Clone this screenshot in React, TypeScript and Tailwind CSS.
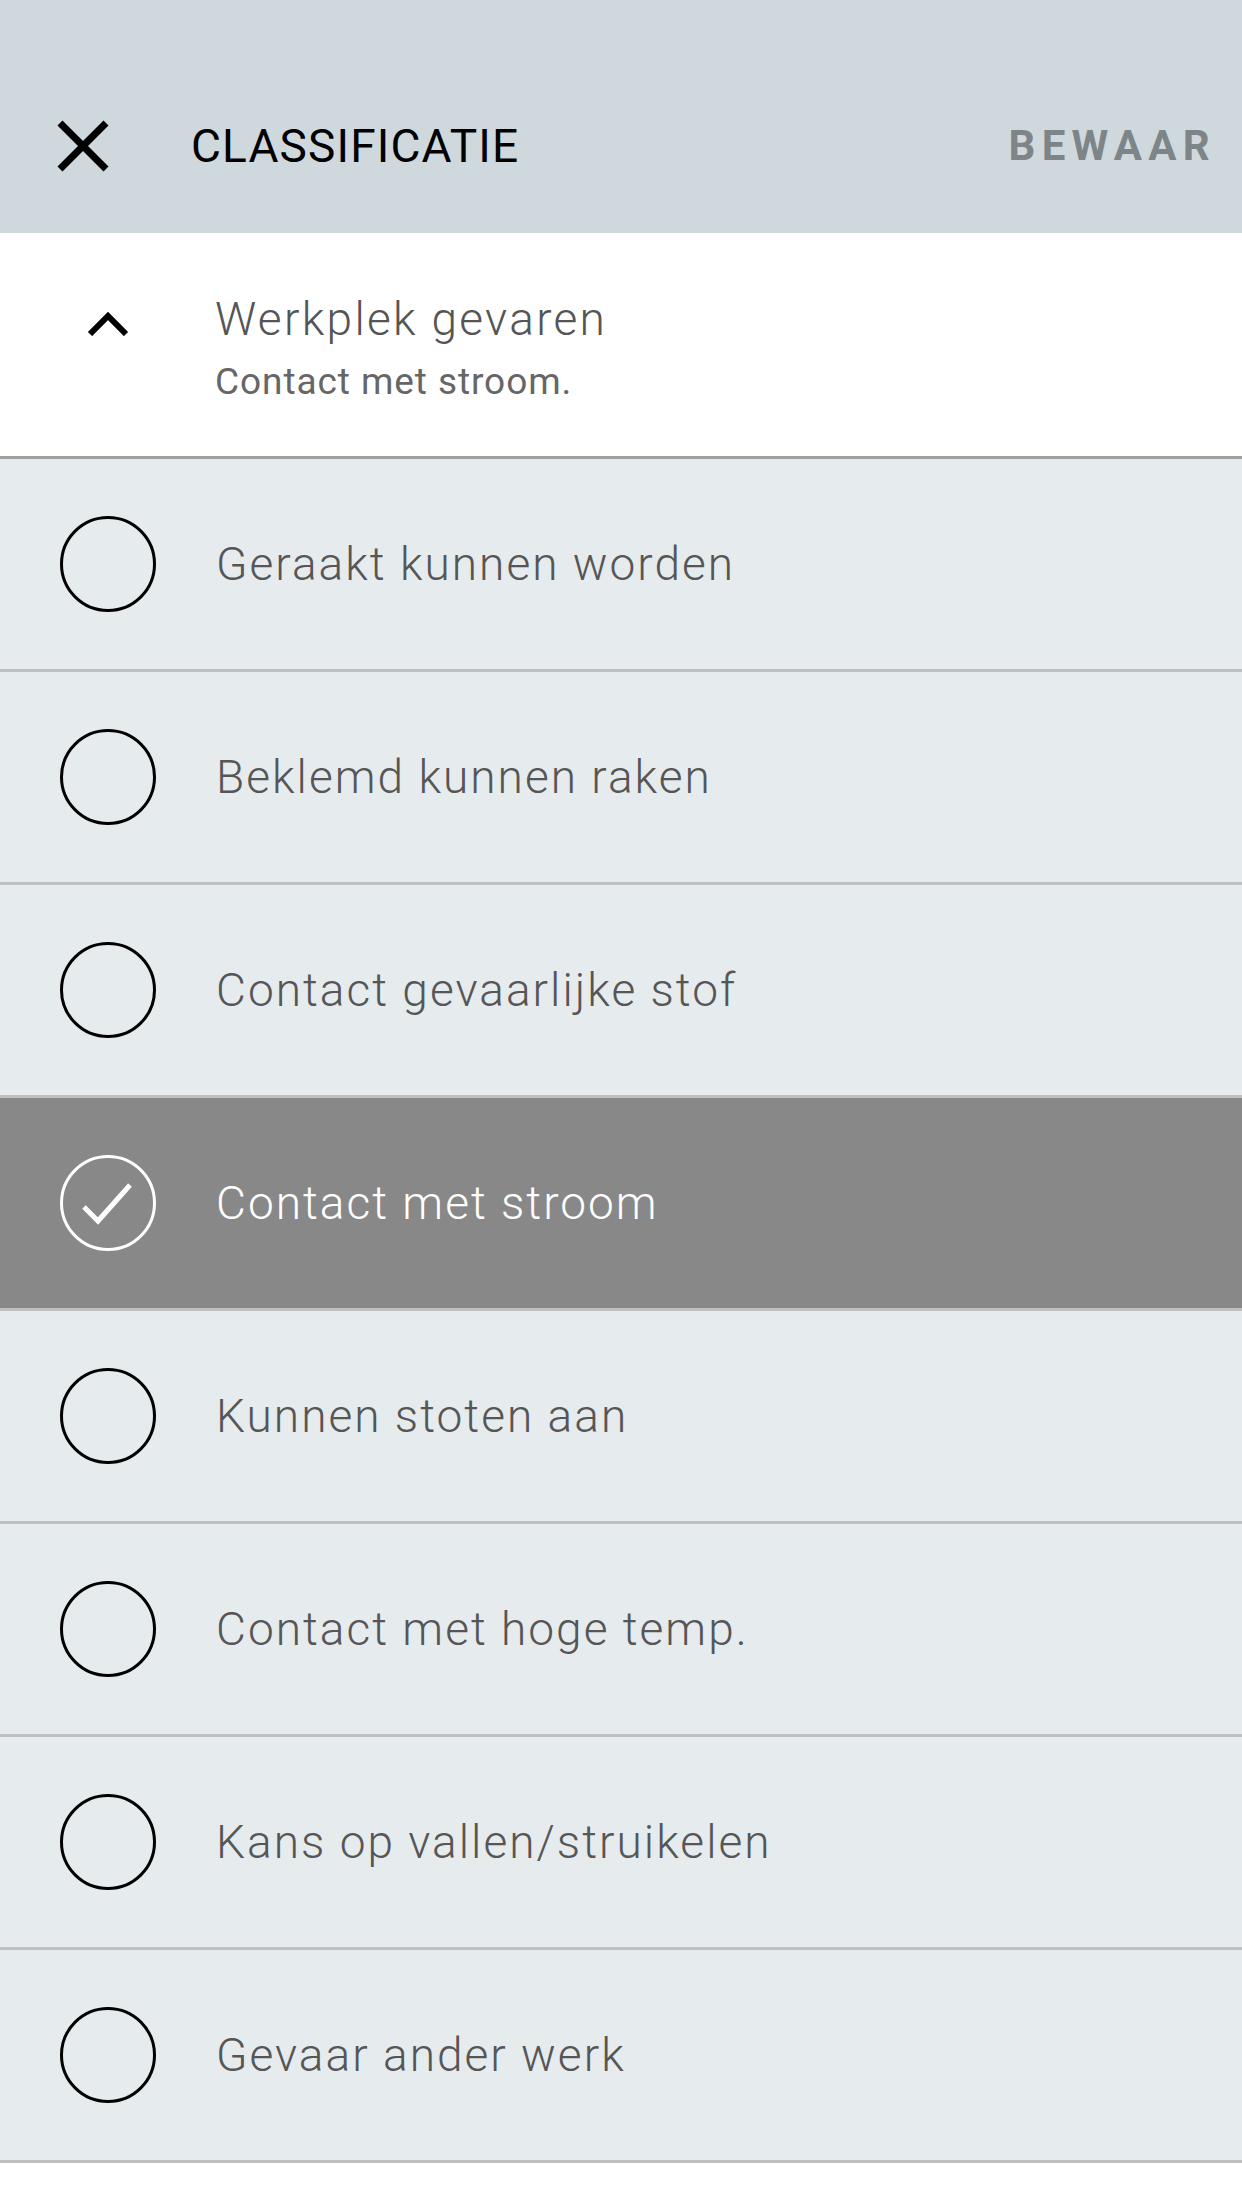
import React from "react";

const items = [
  { label: "Geraakt kunnen worden", selected: false },
  { label: "Beklemd kunnen raken", selected: false },
  { label: "Contact gevaarlijke stof", selected: false },
  { label: "Contact met stroom", selected: true },
  { label: "Kunnen stoten aan", selected: false },
  { label: "Contact met hoge temp.", selected: false },
  { label: "Kans op vallen/struikelen", selected: false },
  { label: "Gevaar ander werk", selected: false },
];

function Row({ label, selected }: { label: string; selected: boolean }) {
  return (
    <div
      className={`flex items-center h-[213px] box-border border-b-[3px] border-[#bdbfc0] ${
        selected ? "bg-[#888888]" : "bg-[#e6ebee]"
      }`}
    >
      <div
        className={`ml-[60px] w-[96px] h-[96px] shrink-0 rounded-full border-[3px] flex items-center justify-center ${
          selected ? "border-white" : "border-black"
        }`}
      >
        {selected && (
          <svg width="96" height="96" viewBox="0 0 96 96" className="shrink-0">
            <polyline
              points="24,52 38,66 70,30"
              fill="none"
              stroke="white"
              strokeWidth="5"
            />
          </svg>
        )}
      </div>
      <div
        className={`ml-[60px] text-[46px] leading-none font-light tracking-[0.044em] ${
          selected ? "text-white" : "text-[#565656]"
        }`}
      >
        {label}
      </div>
    </div>
  );
}

export default function App() {
  return (
    <div
      className="w-[1242px] min-h-[2208px] bg-white"
      style={{ fontFamily: "Roboto, 'Noto Sans', sans-serif" }}
    >
      <div className="h-[233px] bg-[#cfd8dc] pt-[58px] flex items-center">
        <svg width="52" height="52" viewBox="0 0 52 52" className="ml-[57px] shrink-0">
          <line x1="3" y1="3" x2="49" y2="49" stroke="black" strokeWidth="7" />
          <line x1="49" y1="3" x2="3" y2="49" stroke="black" strokeWidth="7" />
        </svg>
        <div className="ml-[82px] text-[46px] leading-none tracking-[0.025em] text-black">CLASSIFICATIE</div>
        <div className="ml-auto mr-[26px] text-[42px] leading-none font-bold tracking-[0.15em] text-[#7e8588]">
          BEWAAR
        </div>
      </div>
      <div className="h-[226px] box-border border-b-[3px] border-[#9e9e9e] bg-white flex items-start pt-[63px]">
        <svg width="42" height="24" viewBox="0 0 42 24" className="ml-[87px] mt-[16px] shrink-0">
          <polyline points="3,22 21,4 39,22" fill="none" stroke="black" strokeWidth="6" />
        </svg>
        <div className="ml-[86px] flex flex-col">
          <div className="text-[46px] leading-[46px] font-light tracking-[0.05em] text-[#555555]">Werkplek gevaren</div>
          <div className="mt-[21px] text-[37px] leading-[38px] tracking-[0.025em] text-[#666666]">Contact met stroom.</div>
        </div>
      </div>
      {items.map((it) => (
        <Row key={it.label} label={it.label} selected={it.selected} />
      ))}
    </div>
  );
}
